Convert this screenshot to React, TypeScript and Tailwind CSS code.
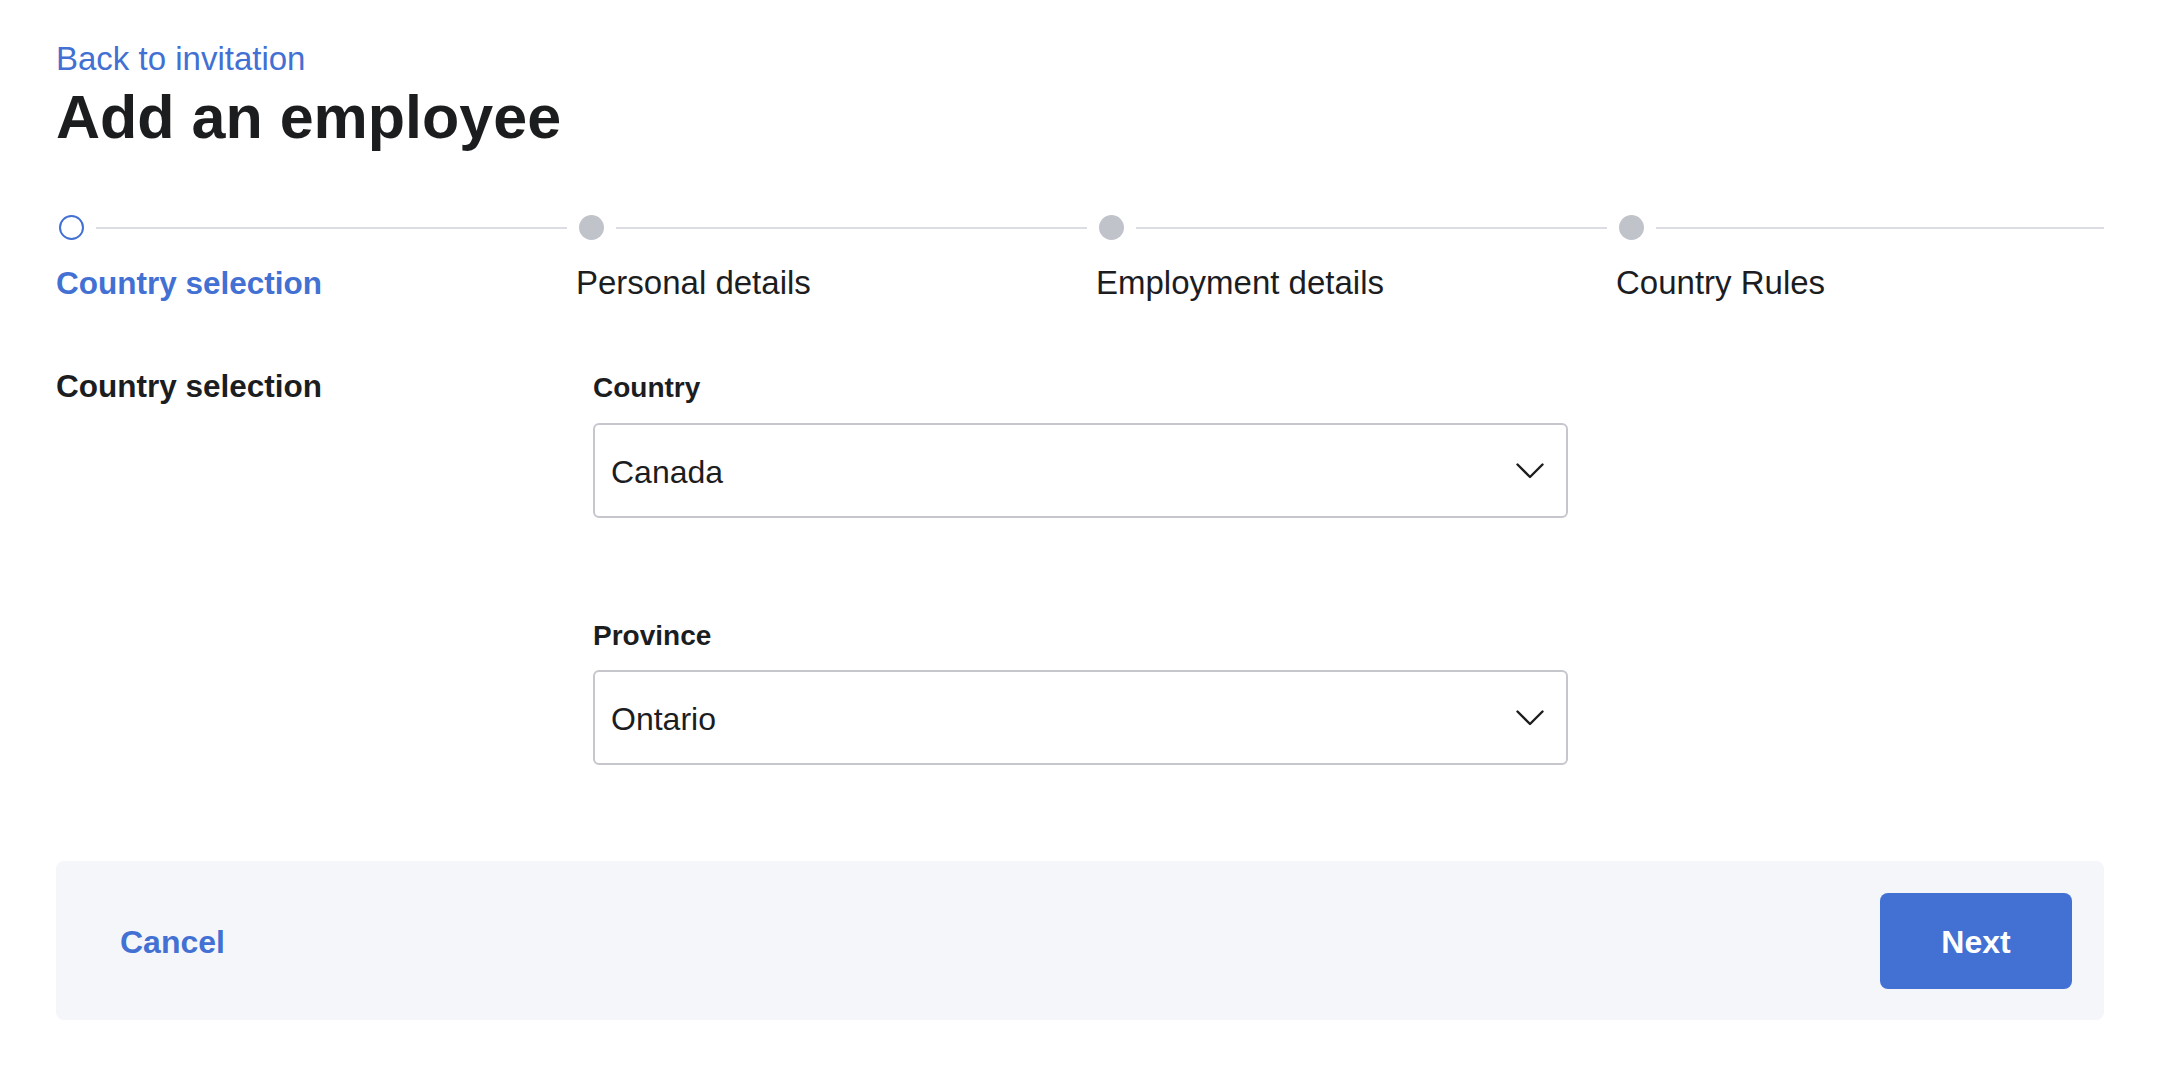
import React from "react";

const steps = [
  { label: "Country selection", active: true },
  { label: "Personal details", active: false },
  { label: "Employment details", active: false },
  { label: "Country Rules", active: false },
];

function Chevron() {
  return (
    <svg width="28" height="16" viewBox="0 0 28 16" fill="none" className="shrink-0">
      <polyline points="1.5,1.5 14,14 26.5,1.5" stroke="#1c1d1f" strokeWidth="2.4" strokeLinecap="round" strokeLinejoin="round" />
    </svg>
  );
}

function SelectBox({ value }: { value: string }) {
  return (
    <div className="flex h-[95px] w-[975px] items-center justify-between rounded-[6px] border-2 border-[#c5c7cd] bg-white pl-[16px] pr-[22px]">
      <span className="pt-[2px] text-[32px] leading-[40px] text-[#1c1d1f]">{value}</span>
      <Chevron />
    </div>
  );
}

export default function App() {
  return (
    <div
      className="min-h-[1086px] w-[2162px] bg-white px-[56px] pt-[39px] text-[#1c1d1f]"
      style={{ fontFamily: '"Liberation Sans", Arial, sans-serif' }}
    >
      <a className="block h-[40px] text-[33px] leading-[40px] text-[#4270d3]">Back to invitation</a>
      <h1 className="mt-[6px] text-[61px] font-bold leading-[64px] text-[#1c1d1f]">Add an employee</h1>

      <div className="mt-[66px] grid w-[2048px] grid-cols-[520px_520px_520px_1fr]">
        {steps.map((s, i) => (
          <div key={s.label} className="flex flex-col">
            <div className="flex h-[25px] items-center">
              {s.active ? (
                <div className="ml-[3px] h-[25px] w-[25px] shrink-0 rounded-full border-2 border-[#4270d3] bg-white" />
              ) : (
                <div className="ml-[3px] h-[25px] w-[25px] shrink-0 rounded-full bg-[#c0c3ca]" />
              )}
              <div className={`ml-[12px] h-[2px] flex-1 bg-[#dcdde2] ${i === 3 ? "mr-0" : "mr-[9px]"}`} />
            </div>
            <div
              className={`mt-[23px] leading-[40px] ${
                s.active ? "text-[31.5px] font-bold text-[#4270d3]" : "text-[33px] text-[#1c1d1f]"
              }`}
            >
              {s.label}
            </div>
          </div>
        ))}
      </div>

      <div className="mt-[63px] grid grid-cols-[537px_975px]">
        <div className="text-[31.5px] font-bold leading-[40px]">Country selection</div>
        <div className="flex flex-col">
          <label className="pt-[2px] text-[28px] font-bold leading-[40px]">Country</label>
          <div className="mt-[15px]">
            <SelectBox value="Canada" />
          </div>
          <label className="mt-[96px] pt-[2px] text-[28px] font-bold leading-[40px]">Province</label>
          <div className="mt-[14px]">
            <SelectBox value="Ontario" />
          </div>
        </div>
      </div>

      <div className="mt-[96px] flex h-[159px] w-[2048px] items-center justify-between rounded-[8px] bg-[#f5f6fa] px-[32px]">
        <button className="px-[32px] pt-[2px] text-[32px] font-bold leading-[40px] text-[#4270d3]">Cancel</button>
        <button className="h-[96px] w-[192px] rounded-[8px] bg-[#4270d3] pt-[2px] text-[32px] font-bold text-white">Next</button>
      </div>
    </div>
  );
}
